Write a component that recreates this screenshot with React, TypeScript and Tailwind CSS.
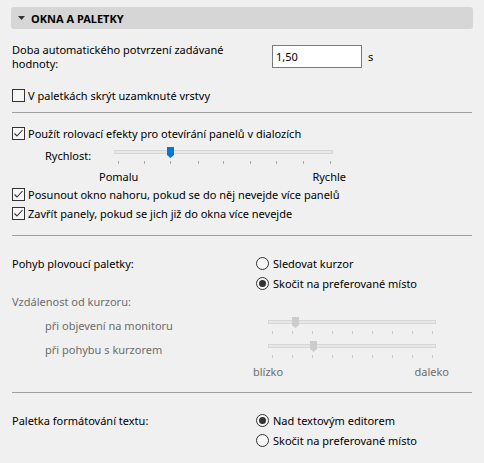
import React from 'react';

const font = {fontFamily: '"Noto Sans", "Open Sans", sans-serif'};

function Checkbox({label, checked}: {label: string; checked?: boolean}) {
  return (
    <label className="flex items-center gap-[3px]">
      <span className="flex h-[13px] w-[13px] items-center justify-center border border-[#333333] bg-[#f7f7f7]">
        {checked ? (
          <svg width="11" height="11" viewBox="0 0 11 11">
            <path d="M1.5 5.5 L4 8 L9.5 2" fill="none" stroke="#333333" strokeWidth="1.1" />
          </svg>
        ) : null}
      </span>
      <span>{label}</span>
    </label>
  );
}

function Radio({label, checked}: {label: string; checked?: boolean}) {
  return (
    <label className="flex items-center gap-[4px]">
      <span className="flex h-[13px] w-[13px] items-center justify-center rounded-full border border-[#333333] bg-[#f7f7f7]">
        {checked ? <span className="h-[7px] w-[7px] rounded-full bg-[#333333]" /> : null}
      </span>
      <span>{label}</span>
    </label>
  );
}

type SliderProps = {
  width: number;
  ticks: number[];
  thumb: number;
  disabled?: boolean;
};

// ticks and thumb are offsets from the left edge of the track
function Slider({width, ticks, thumb, disabled}: SliderProps) {
  const thumbColor = disabled ? '#cccccc' : '#0078d7';
  return (
    <div className="relative h-[24px]" style={{width}}>
      <div className="absolute left-0 right-0 top-[7px] h-[4px] border border-[#d6d6d6] bg-[#e7e7e7]" />
      {ticks.map((x) => (
        <div
          key={x}
          className={`absolute top-[18px] h-[3px] w-px ${disabled ? 'bg-[#c8c8c8]' : 'bg-[#a8a8a8]'}`}
          style={{left: x}}
        />
      ))}
      <svg className="absolute top-[4px]" style={{left: thumb}} width="7" height="11" viewBox="0 0 7 11">
        <path d="M0 0 H7 V8 L3.5 11 L0 8 Z" fill={thumbColor} />
      </svg>
    </div>
  );
}

export default function App() {
  const fastTicks = [4, 30, 56, 84, 109, 136, 162, 189, 216];
  const distTicks = [4, 24, 44, 64, 84, 104, 124, 144, 164];

  return (
    <div className="h-[463px] w-[484px] bg-[#f0f0f0] px-[11px] pt-[7px] text-[11px] leading-[15px] text-black" style={font}>
      <div className="flex h-[22px] items-center rounded-[3px] bg-[#d6d6d6] pl-[7px]">
        <svg width="7" height="4" viewBox="0 0 7 4" className="mr-[6px]">
          <path d="M0 0 H7 L3.5 4 Z" fill="#333333" />
        </svg>
        <span className="text-[11px] font-bold text-black">OKNA A PALETKY</span>
      </div>

      <div className="px-px">
        <div className="mt-[16px] flex h-[23px] items-center">
          <div className="w-[260px] leading-[14px]">
            Doba automatického potvrzení zadávané
            <br />
            hodnoty:
          </div>
          <div className="flex h-[23px] w-[90px] items-center border border-[#7a7a7a] bg-white pl-[3px]">1,50</div>
          <span className="ml-[6px]">s</span>
        </div>

        <div className="mt-[17px] flex h-[20px] items-center">
          <Checkbox label="V paletkách skrýt uzamknuté vrstvy" />
        </div>

        <div className="mt-[7px] h-px bg-[#a0a0a0]" />

        <div className="mt-[10px] flex h-[20px] items-center">
          <Checkbox label="Použít rolovací efekty pro otevírání panelů v dialozích" checked />
        </div>

        <div className="flex h-[24px] items-center">
          <span className="ml-[33px] w-[69px]">Rychlost:</span>
          <Slider width={219} ticks={fastTicks} thumb={53} />
        </div>

        <div className="ml-[87px] flex h-[18px] w-[247px] items-center justify-between">
          <span>Pomalu</span>
          <span>Rychle</span>
        </div>

        <div className="flex h-[18px] items-center">
          <Checkbox label="Posunout okno nahoru, pokud se do něj nevejde více panelů" checked />
        </div>
        <div className="flex h-[20px] items-center">
          <Checkbox label="Zavřít panely, pokud se jich již do okna více nevejde" checked />
        </div>

        <div className="mt-[12px] h-px bg-[#a0a0a0]" />

        <div className="mt-[17px] grid grid-cols-[244px_1fr]">
          <div className="flex h-[20px] items-center">Pohyb plovoucí paletky:</div>
          <div>
            <div className="flex h-[20px] items-center">
              <Radio label="Sledovat kurzor" />
            </div>
            <div className="flex h-[20px] items-center">
              <Radio label="Skočit na preferované místo" checked />
            </div>
          </div>
        </div>

        <div className="flex h-[16px] items-center text-[#6d6d6d]">Vzdálenost od kurzoru:</div>

        <div className="mt-[4px] text-[#6d6d6d]">
          <div className="flex h-[24px] items-center">
            <span className="ml-[33px] w-[223px]">při objevení na monitoru</span>
            <Slider width={168} ticks={distTicks} thumb={24} disabled />
          </div>
          <div className="flex h-[24px] items-center">
            <span className="ml-[33px] w-[223px]">při pohybu s kurzorem</span>
            <Slider width={168} ticks={distTicks} thumb={42} disabled />
          </div>
          <div className="ml-[241px] flex h-[20px] w-[196px] items-center justify-between">
            <span>blízko</span>
            <span>daleko</span>
          </div>
        </div>

        <div className="mt-[11px] h-px bg-[#a0a0a0]" />

        <div className="mt-[17px] grid grid-cols-[244px_1fr]">
          <div className="flex h-[20px] items-center">Paletka formátování textu:</div>
          <div>
            <div className="flex h-[20px] items-center">
              <Radio label="Nad textovým editorem" checked />
            </div>
            <div className="flex h-[20px] items-center">
              <Radio label="Skočit na preferované místo" />
            </div>
          </div>
        </div>
      </div>
    </div>
  );
}
